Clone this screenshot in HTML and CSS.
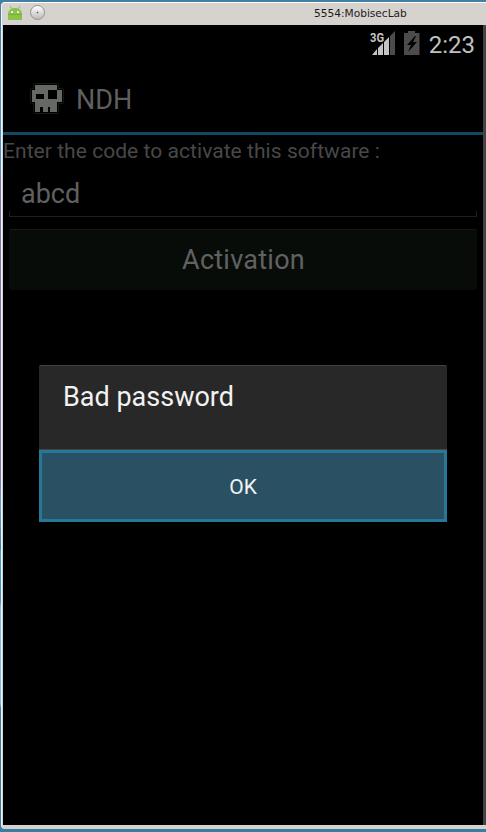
FILE: index.html
```
<!DOCTYPE html>
<html lang="en">
<head>
    <meta charset="UTF-8">
    <title>5554:MobisecLab</title>
    <link rel="stylesheet" href="styles.css">
</head>
<body>
    <div class="window">
        <div class="titlebar">
            <svg class="android" width="16" height="16" viewBox="0 0 16 16">
                <path d="M3 0l2 3M13 0l-2 3" stroke="#8fbd4b" stroke-width="1"/>
                <path d="M1 8C1 0 15 0 15 8z" fill="#8bc34a"/>
                <path d="M1 9h14v5H1z" fill="#8bc34a"/>
                <path d="M1 8h14v1H1z" fill="#75ad3b"/>
                <path d="M4 5h2v2H4zM10 5h2v2h-2z" fill="#e4f1d2"/>
            </svg>
            <span class="knob"></span>
            <span class="window-title">5554:MobisecLab</span>
        </div>
        <div class="content">
            <div class="screen">
                <div class="statusbar">
                    <svg class="signal" width="26" height="26" viewBox="0 0 26 26">
                        <path d="M20 5l5-5v24h-5z" fill="#4b4c4b"/>
                        <path d="M2 24l5-6v6zM8 17l5-5v12H8zM14 11l5-5v18h-5z" fill="#c4c4c4"/>
                        <text x="0" y="11" class="network" textLength="14" lengthAdjust="spacingAndGlyphs">3G</text>
                    </svg>
                    <svg class="battery" width="16" height="24" viewBox="0 0 16 24">
                        <path d="M4 0h7v2h4.500v22H0V2h4z" fill="#4b4c4b"/>
                        <path d="M11 5L3 14h4l-3 7 9-10H9l3-6z" fill="#000"/>
                    </svg>
                    <span class="clock">2:23</span>
                </div>
                <div class="actionbar">
                    <svg class="logo" width="38" height="34" viewBox="0 0 38 34">
                        <path d="M7 2h22v5h5v12h-5v10H7V19H4V7h3z" fill="none" stroke="#111a15" stroke-width="4" stroke-linejoin="round"/>
                        <path d="M7 2h22v5h5v12h-5v10H7V19H4V7h3z" fill="none" stroke="#000" stroke-width="2"/>
                        <path d="M7 2h22v5h5v12h-5v10H7V19H4V7h3z" fill="#666864"/>
                        <path d="M8 11h8v5H8zM20 7h9v9h-9zM12 24h3v5h-3zM20 24h2v5h-2z" fill="#000"/>
                    </svg>
                    <span class="app-name">NDH</span>
                </div>
                <div class="form">
                    <div class="label">Enter the code to activate this software :</div>
                    <div class="input"><span>abcd</span></div>
                    <div class="activate">Activation</div>
                </div>
                <div class="dialog">
                    <div class="message">Bad password</div>
                    <div class="ok">OK</div>
                </div>
            </div>
        </div>
    </div>
</body>
</html>
```

FILE: styles.css
```
body {
    margin: 0;
    width: 486px;
    height: 832px;
    overflow: hidden;
    box-sizing: border-box;
    padding: 2px 0 0 1px;
    font-family: Roboto, sans-serif;
    background: linear-gradient(#4580a4 0, #4580a4 40px, #4a91bd 80px, #4a91bd 165px, #7777ae 180px, #7777ae 475px, #5f9fce 505px, #347fa6 548px, #3ea2cb 552px, #3a92ba 600px, #73bde5 608px, #75bce5 704px, #397da3 708px, #397da3 100%);
}
.window {
    width: 485px;
    height: 827px;
    box-sizing: border-box;
    border-top: 1px solid #fff;
    border-left: 1px solid #f3f2f1;
    border-radius: 4px 0 0 4px;
    background: #d6d2ce;
    overflow: hidden;
}
.titlebar {
    position: relative;
    display: flex;
    height: 22px;
    padding-left: 5px;
}
.android {
    margin-top: 3px;
}
.knob {
    width: 15px;
    height: 15px;
    margin: 2px 0 0 7px;
    border: 1px solid #96928e;
    border-radius: 50%;
    box-sizing: border-box;
    background: radial-gradient(circle, #555 0, #777 0.6px, transparent 1.2px), linear-gradient(#fff, #bbb);
}
.window-title {
    position: absolute;
    left: 312px;
    top: 4px;
    font: 10.6px/13px "DejaVu Sans", sans-serif;
    color: #1c1b1a;
}
.content {
    margin-left: 1px;
    height: 800px;
    background: #454341;
}
.screen {
    position: relative;
    width: 480px;
    height: 800px;
    background: #000;
}
.statusbar {
    display: flex;
    justify-content: flex-end;
    height: 38px;
    padding-right: 8px;
}
.signal {
    margin-top: 6px;
}
.network {
    font: bold 12.5px Roboto, sans-serif;
    fill: #c4c4c4;
    stroke: #000;
    stroke-width: 2px;
    paint-order: stroke;
}
.battery {
    margin: 6px 9px 0 8px;
}
.clock {
    font-size: 24px;
    line-height: 40px;
    color: #c0c0c0;
}
.actionbar {
    display: flex;
    height: 69px;
    border-bottom: 3px solid #134a61;
}
.logo {
    margin: 20px 0 0 25px;
}
.app-name {
    margin-left: 10px;
    font-size: 27px;
    line-height: 75px;
    color: #5f5f5f;
}
.label {
    height: 34px;
    font-size: 21px;
    line-height: 32px;
    letter-spacing: 0.05px;
    color: #484848;
}
.input {
    height: 48px;
    margin: 0 6px;
    padding-left: 12px;
    font-size: 27px;
    line-height: 50px;
    color: #606060;
    background: linear-gradient(#1e201f, #1e201f) left bottom / 1px 6px no-repeat,
        linear-gradient(#1e201f, #1e201f) right bottom / 1px 6px no-repeat,
        linear-gradient(#1e201f, #1e201f) left bottom / 100% 1px no-repeat;
}
.activate {
    height: 60px;
    margin: 12px 6px 0;
    border-top: 1px solid #151a17;
    border-radius: 2px;
    background: #070c09;
    font-size: 27px;
    line-height: 60px;
    letter-spacing: 0.25px;
    text-indent: 1px;
    text-align: center;
    color: #616161;
}
.dialog {
    position: absolute;
    left: 36px;
    top: 340px;
    width: 408px;
    height: 157px;
    box-sizing: border-box;
    border-top: 1px solid #434343;
    border-radius: 2px 2px 0 0;
    background: #282828;
}
.message {
    height: 83px;
    padding-left: 24px;
    border-bottom: 1px solid #47443f;
    font-size: 27px;
    line-height: 62px;
    color: #f2f2f2;
}
.ok {
    height: 66px;
    border: 3px solid #267899;
    background: #2a5163;
    font-size: 21px;
    line-height: 68px;
    text-align: center;
    color: #f2f2f2;
}
```
